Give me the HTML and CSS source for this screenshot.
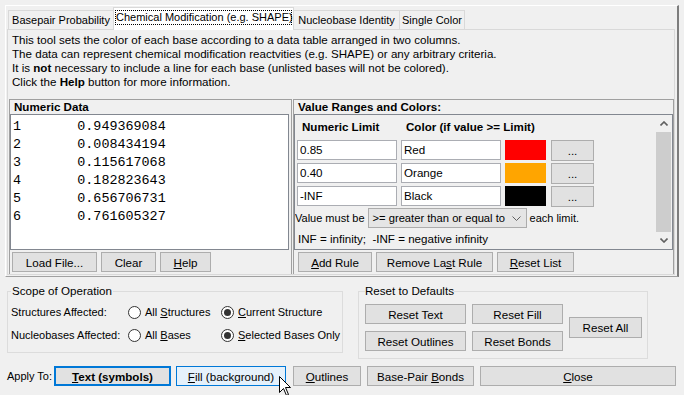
FILE: index.html
```html
<!DOCTYPE html>
<html lang="en">
<head>
    <meta charset="UTF-8">
    <title>Color Bases</title>
    <link rel="stylesheet" href="styles.css">
</head>
<body>
    <div class="frame">
        <div class="tabbar">
            <div class="tab tab-1">Basepair Probability</div>
            <div class="tab tab-2 active"><span class="focus">Chemical Modification (e.g. SHAPE)</span></div>
            <div class="tab tab-3">Nucleobase Identity</div>
            <div class="tab tab-4">Single Color</div>
        </div>
        <div class="page">
            <p class="intro">
                This tool sets the color of each base according to a data table arranged in two columns.<br>
                The data can represent chemical modification reactvities (e.g. SHAPE) or any arbitrary criteria.<br>
                It is <b>not</b> necessary to include a line for each base (unlisted bases will not be colored).<br>
                Click the <b>Help</b> button for more information.
            </p>
            <div class="panels">
                <div class="panel data-panel">
                    <div class="panel-title">Numeric Data</div>
                    <pre class="data-box">1&#9;0.949369084
2&#9;0.008434194
3&#9;0.115617068
4&#9;0.182823643
5&#9;0.656706731
6&#9;0.761605327</pre>
                    <div class="btn-row">
                        <button class="btn w-load">Load File...</button>
                        <button class="btn w-clear">Clear</button>
                        <button class="btn w-help"><u>H</u>elp</button>
                    </div>
                </div>
                <div class="panel ranges-panel">
                    <div class="panel-title">Value Ranges and Colors:</div>
                    <div class="scroll-box">
                        <div class="rules">
                            <div class="rule-head">
                                <span class="col-limit">Numeric Limit</span>
                                <span>Color (if value &gt;= Limit)</span>
                            </div>
                            <div class="rule">
                                <div class="field">0.85</div>
                                <div class="field">Red</div>
                                <div class="swatch red"></div>
                                <button class="btn dots">...</button>
                            </div>
                            <div class="rule">
                                <div class="field">0.40</div>
                                <div class="field">Orange</div>
                                <div class="swatch orange"></div>
                                <button class="btn dots">...</button>
                            </div>
                            <div class="rule">
                                <div class="field">-INF</div>
                                <div class="field">Black</div>
                                <div class="swatch black"></div>
                                <button class="btn dots">...</button>
                            </div>
                            <div class="compare">
                                <span>Value must be</span>
                                <div class="combo">
                                    <span>&gt;= greater than or equal to</span>
                                    <svg width="9" height="5" viewBox="0 0 9 5"><polyline points="0.5,0.5 4.5,4.5 8.5,0.5" fill="none" stroke="#606060" stroke-width="1"/></svg>
                                </div>
                                <span>each limit.</span>
                            </div>
                            <div class="note">INF = infinity;&nbsp; -INF = negative infinity</div>
                        </div>
                        <div class="scrollbar">
                            <div class="arrow">
                                <svg width="8" height="5" viewBox="0 0 8 5"><polyline points="0.5,4.5 4,1 7.5,4.5" fill="none" stroke="#606060" stroke-width="1.6"/></svg>
                            </div>
                            <div class="thumb"></div>
                            <div class="arrow">
                                <svg width="8" height="5" viewBox="0 0 8 5"><polyline points="0.5,0.5 4,4 7.5,0.5" fill="none" stroke="#606060" stroke-width="1.6"/></svg>
                            </div>
                        </div>
                    </div>
                    <div class="btn-row">
                        <button class="btn w-add"><u>A</u>dd Rule</button>
                        <button class="btn w-remove">Remove La<u>s</u>t Rule</button>
                        <button class="btn w-reset"><u>R</u>eset List</button>
                    </div>
                </div>
            </div>
        </div>
    </div>

    <div class="lower">
        <fieldset class="group scope">
            <legend>Scope of Operation</legend>
            <div class="scope-row">
                <span class="scope-label">Structures Affected:</span>
                <label class="radio"><span class="dot"></span><span>All <u>S</u>tructures</span></label>
                <label class="radio"><span class="dot checked"></span><span><u>C</u>urrent Structure</span></label>
            </div>
            <div class="scope-row">
                <span class="scope-label">Nucleobases Affected:</span>
                <label class="radio"><span class="dot"></span><span>All <u>B</u>ases</span></label>
                <label class="radio"><span class="dot checked"></span><span><u>S</u>elected Bases Only</span></label>
            </div>
        </fieldset>
        <fieldset class="group reset">
            <legend>Reset to Defaults</legend>
            <div class="reset-grid">
                <button class="btn">Reset Text</button>
                <button class="btn">Reset Fill</button>
                <button class="btn reset-all">Reset All</button>
                <button class="btn">Reset Outlines</button>
                <button class="btn">Reset Bonds</button>
            </div>
        </fieldset>
    </div>

    <div class="apply">
        <span class="apply-label">Apply To:</span>
        <button class="btn default w-text"><u>T</u>ext (symbols)</button>
        <button class="btn hover w-fill"><u>F</u>ill (background)</button>
        <button class="btn w-outlines"><u>O</u>utlines</button>
        <button class="btn w-bonds">Base-Pair <u>B</u>onds</button>
        <button class="btn w-close"><u>C</u>lose</button>
    </div>

    <svg class="cursor" width="13" height="21" viewBox="0 0 13 21">
        <polygon points="0.5,0.5 0.5,16.5 4.5,12.5 7.5,19.5 9.5,18.5 6.5,11.5 11.5,11.5" fill="#fff" stroke="#000" stroke-width="1"/>
    </svg>
</body>
</html>
```

FILE: styles.css
```css
* {
    box-sizing: border-box;
}

body {
    margin: 0;
    width: 684px;
    height: 395px;
    overflow: hidden;
    position: relative;
    background: #f0f0f0;
    font-family: "Liberation Sans", Arial, sans-serif;
    font-size: 11.6px;
    color: #000;
}

u {
    text-decoration-thickness: 1px;
    text-underline-offset: 1px;
}

.frame {
    margin: 5px 0 0 5px;
    width: 674px;
    height: 272px;
    border-top: 1px solid #fff;
    border-left: 1px solid #fff;
    border-right: 2px solid #7d7d7d;
    border-bottom: 1px solid #a0a0a0;
}

/* tabs */
.tabbar {
    display: flex;
    align-items: flex-end;
    height: 23px;
    padding-left: 2px;
}

.tab {
    height: 19px;
    line-height: 18px;
    border: 1px solid #d9d9d9;
    border-bottom: none;
    background: #f0f0f0;
    text-align: center;
    margin-right: -1px;
    white-space: nowrap;
    font-size: 11px;
}

.tab.active {
    position: relative;
    z-index: 1;
    height: 23px;
    margin-bottom: -1px;
    background: #fff;
    padding-top: 2px;
}

.focus {
    display: block;
    margin: 0 1px;
    height: 15px;
    line-height: 13px;
    border: 1px dotted #000;
}

.tab-1 { width: 106px; }
.tab-2 { width: 181px; }
.tab-3 { width: 107px; }
.tab-4 { width: 66px; }

.page {
    margin-left: 1px;
    width: 668px;
    height: 246px;
    border: 1px solid #d9d9d9;
    background: #f0f0f0;
}

.intro {
    margin: 0;
    padding: 3px 0 0 4px;
    line-height: 14px;
}

.panels {
    display: flex;
    gap: 1px;
    margin-top: 10px;
    padding-left: 1px;
}

.panel {
    height: 175px;
    border: 1px solid #a0a0a0;
    border-bottom: none;
}

.data-panel {
    width: 283px;
}

.ranges-panel {
    width: 381px;
}

.panel-title {
    height: 14px;
    line-height: 14px;
    padding-left: 4px;
    font-weight: bold;
}

.data-box {
    margin: 0;
    width: 279px;
    height: 136px;
    padding: 3px 2px;
    border: 1px solid #828790;
    background: #fff;
    font-family: "Liberation Mono", "Courier New", monospace;
    font-size: 13.4px;
    line-height: 18px;
    tab-size: 8;
}

.btn-row {
    display: flex;
    gap: 4px;
    margin-top: 2px;
    padding-left: 2px;
}

.ranges-panel .btn-row {
    padding-left: 4px;
}

.btn {
    height: 20px;
    padding: 0;
    border: 1px solid #adadad;
    background: #e1e1e1;
    font-family: inherit;
    font-size: 11.6px;
    color: #000;
    white-space: nowrap;
}

.w-load { width: 85px; }
.w-clear { width: 55px; }
.w-help { width: 51px; }
.w-add { width: 74px; }
.w-remove { width: 117px; }
.w-reset { width: 77px; }

/* value ranges */
.scroll-box {
    display: flex;
    width: 379px;
    height: 136px;
    border: 1px solid #828790;
}

.rules {
    flex: 1;
    padding-left: 2px;
    overflow: hidden;
}

.rule-head {
    display: flex;
    height: 25px;
    padding: 5px 0 0 5px;
    line-height: 14px;
    font-weight: bold;
}

.col-limit {
    width: 104px;
}

.rule {
    display: flex;
    align-items: center;
    gap: 4px;
    height: 20px;
    margin-bottom: 3px;
}

.field {
    width: 100px;
    height: 20px;
    line-height: 18px;
    padding-left: 2px;
    border: 1px solid #abadb3;
    background: #fff;
}

.swatch {
    width: 41px;
    height: 20px;
}

.red { background: #ff0000; }
.orange { background: #ffa500; }
.black { background: #000; }

.dots {
    width: 43px;
    height: 21px;
    margin-left: 1px;
}

.compare {
    display: flex;
    align-items: center;
    gap: 3px;
    height: 20px;
    margin-top: -1px;
    margin-left: -2px;
    white-space: nowrap;
    font-size: 11px;
}

.combo {
    display: flex;
    align-items: center;
    justify-content: space-between;
    width: 159px;
    height: 20px;
    padding: 0 5px 0 4px;
    border: 1px solid #acacac;
    background: #e5e5e5;
    font-size: 11.2px;
}

.note {
    margin-top: 4px;
    padding-left: 1px;
    line-height: 14px;
}

.scrollbar {
    display: flex;
    flex-direction: column;
    width: 17px;
    background: #f0f0f0;
}

.arrow {
    display: flex;
    align-items: center;
    justify-content: center;
    height: 17px;
}

.thumb {
    flex: 1;
    margin: 0 1px;
    background: #cdcdcd;
}

/* lower groups */
.lower {
    display: flex;
    align-items: flex-start;
    margin-top: 7px;
    padding-left: 7px;
}

.group {
    margin: 0;
    border: 1px solid #dcdcdc;
}

.group legend {
    padding: 0 1px;
    line-height: 14px;
}

.scope {
    width: 336px;
    height: 69px;
    padding: 4px 3px 0 3px;
}

.scope-row {
    display: flex;
    align-items: center;
    height: 20px;
    margin-bottom: 3px;
    white-space: nowrap;
    font-size: 11px;
}

.scope-label {
    width: 117px;
}

.radio {
    display: flex;
    align-items: center;
    gap: 4px;
    width: 93px;
}

.dot {
    flex: none;
    width: 13px;
    height: 13px;
    border: 1px solid #333;
    border-radius: 50%;
    background: #fff;
    display: flex;
    align-items: center;
    justify-content: center;
}

.dot.checked::after {
    content: "";
    width: 7px;
    height: 7px;
    border-radius: 50%;
    background: #333;
}

.reset {
    width: 290px;
    height: 75px;
    margin-left: 15px;
    padding: 6px 0 0 6px;
}

.reset legend {
    padding: 0;
}

.reset-grid {
    display: grid;
    grid-template-columns: 101px 91px 73px;
    grid-template-rows: 20px 20px;
    column-gap: 6px;
    row-gap: 7px;
}

.reset-all {
    grid-column: 3;
    grid-row: 1 / 3;
    align-self: center;
    height: 21px;
}

/* apply row */
.apply {
    display: flex;
    align-items: center;
    margin-top: 7px;
    padding-left: 7px;
}

.apply-label {
    width: 47px;
    white-space: nowrap;
    font-size: 11px;
}

.btn.default {
    border: 2px solid #0078d7;
    font-weight: bold;
}

.btn.hover {
    border-color: #0078d7;
    background: #e5f1fb;
}

.w-text { width: 117px; }
.w-fill { width: 110px; margin-left: 5px; }
.w-outlines { width: 68px; margin-left: 7px; }
.w-bonds { width: 107px; margin-left: 6px; }
.w-close { width: 196px; margin-left: 6px; }

.cursor {
    position: absolute;
    left: 279px;
    top: 376px;
}
```
